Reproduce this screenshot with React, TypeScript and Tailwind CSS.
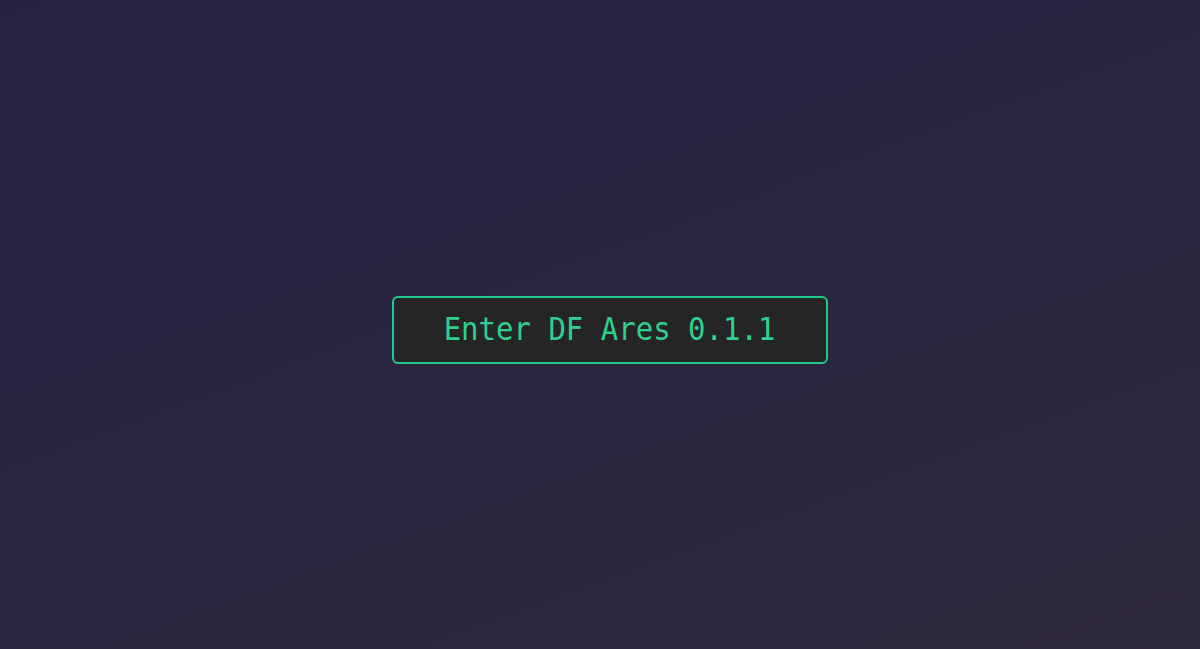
export default function App() {
  return (
    <div className="flex h-[649px] w-full items-center justify-center bg-[linear-gradient(160deg,#272144_0%,#2b2541_50%,#302b3b_100%)]">
      <button
        type="button"
        className="ml-[19px] mt-[10px] flex h-[68px] w-[436px] items-center justify-center rounded-[6px] border-2 border-[#23c98c] bg-[#252526] text-[29px] text-[#2fd08f]"
        style={{ fontFamily: '"DejaVu Sans Mono", "Liberation Mono", monospace' }}
      >
        <span className="inline-block scale-y-[1.08]">Enter DF Ares 0.1.1</span>
      </button>
    </div>
  );
}
